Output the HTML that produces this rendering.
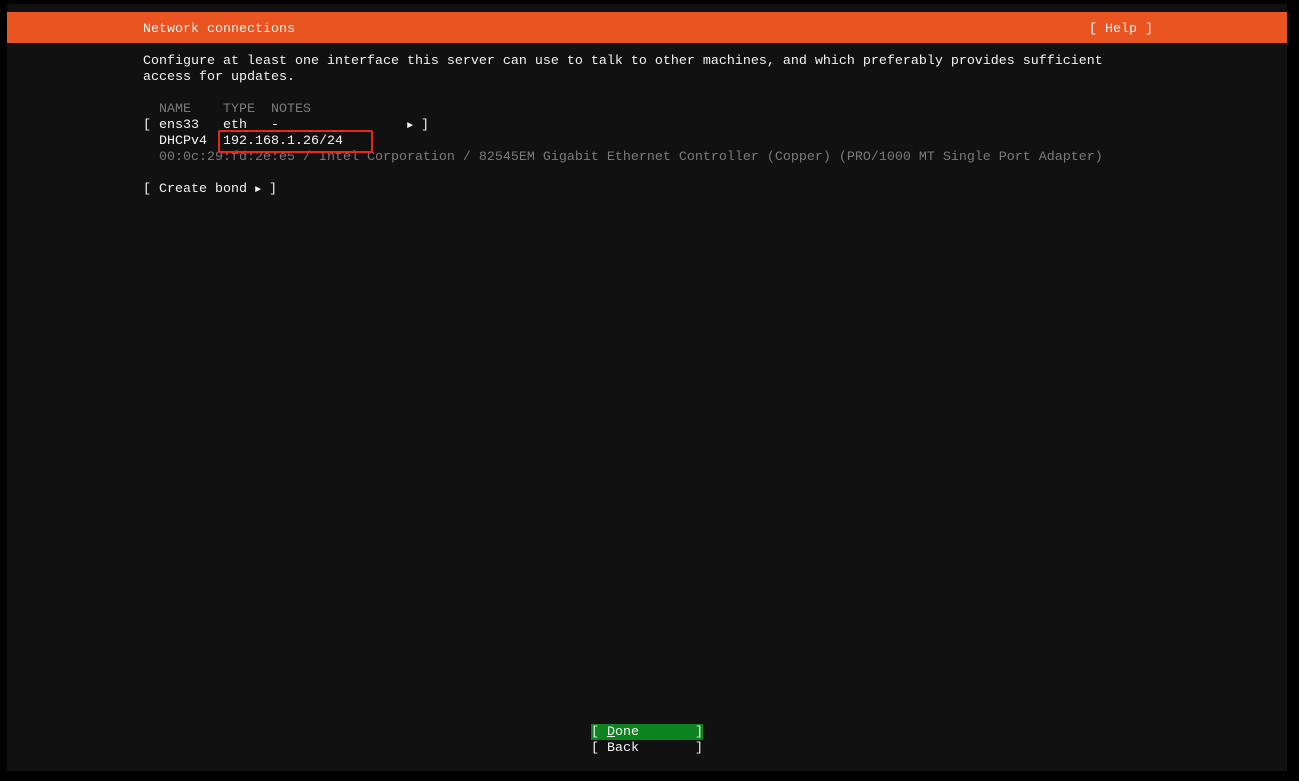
<!DOCTYPE html>
<html><head><meta charset="utf-8"><style>
html,body{margin:0;padding:0;background:#000;width:1299px;height:781px;overflow:hidden}
.panel{position:absolute;left:7px;top:4px;width:1280px;height:767px;background:#111}
.bar{position:absolute;left:7px;top:12px;width:1280px;height:31px;background:#e95420}
.t{position:absolute;font-family:"Liberation Mono",monospace;font-size:13.33px;line-height:16px;color:#f2f2f2;white-space:pre}
.g{color:#7a7a7a}
.a{font-size:10px}
.box{position:absolute;left:218px;top:130px;width:151px;height:19px;border:2px solid #e8261c;border-radius:2px}
.done{position:absolute;left:591px;top:724px;width:112px;height:16px;background:#0e8420}
</style></head><body>
<div class="panel"></div>
<div class="bar"></div>
<div class="t" style="left:143px;top:22px">Network connections</div>
<div class="t" style="left:1089px;top:22px">[ Help ]</div>
<div class="t" style="left:143px;top:54px">Configure at least one interface this server can use to talk to other machines, and which preferably provides sufficient
access for updates.</div>
<div class="t g" style="left:143px;top:102px">  NAME    TYPE  NOTES</div>
<div class="t" style="left:143px;top:118px">[ ens33   eth   -                <span class="a">►</span> ]</div>
<div class="t" style="left:143px;top:134px">  DHCPv4  192.168.1.26/24</div>
<div class="t g" style="left:143px;top:150px">  00:0c:29:fd:2e:e5 / Intel Corporation / 82545EM Gigabit Ethernet Controller (Copper) (PRO/1000 MT Single Port Adapter)</div>
<div class="t" style="left:143px;top:182px">[ Create bond <span class="a">►</span> ]</div>
<div class="box"></div>
<div class="done"></div>
<div class="t" style="left:591px;top:725px">[ <u>D</u>one       ]
[ Back       ]</div>
</body></html>
